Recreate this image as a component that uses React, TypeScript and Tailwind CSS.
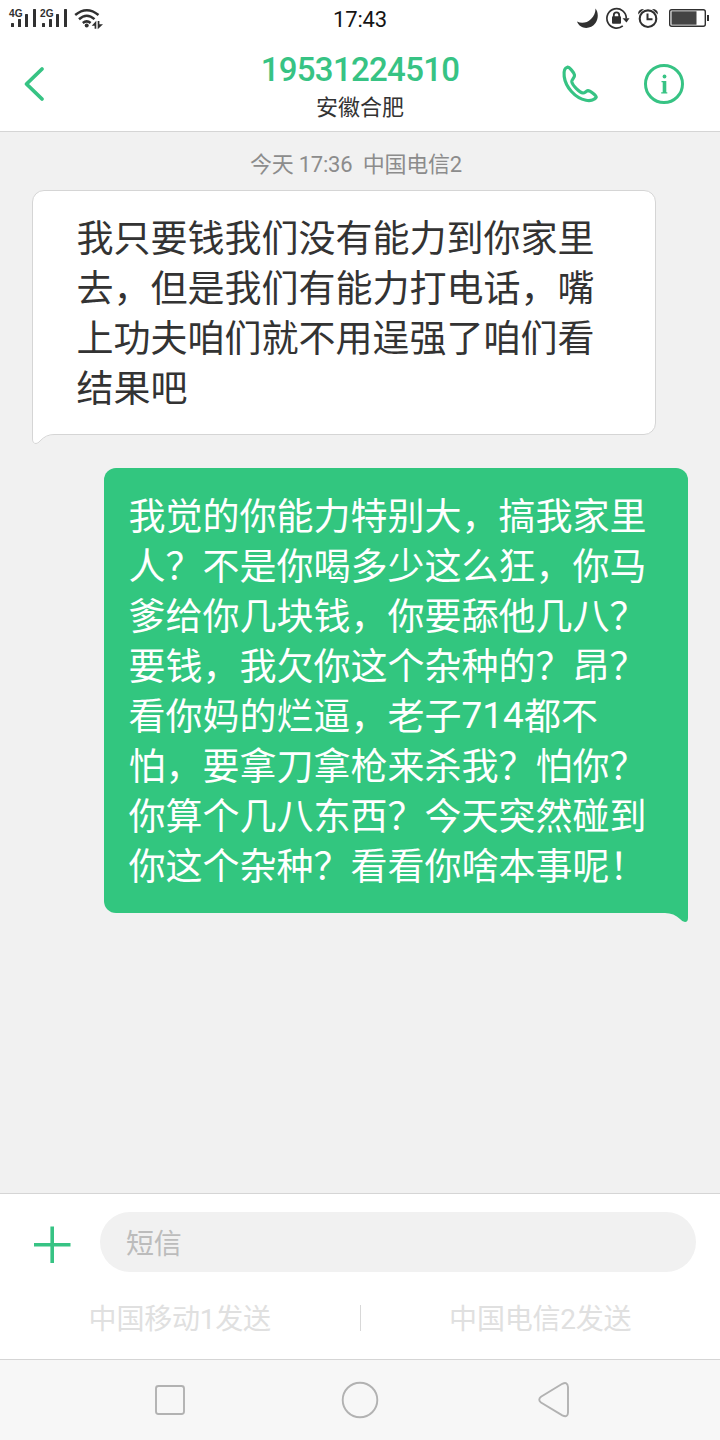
import React from "react";

const received = ["我只要钱我们没有能力到你家里", "去，但是我们有能力打电话，嘴", "上功夫咱们就不用逞强了咱们看", "结果吧"];
const sent = [
  "我觉的你能力特别大，搞我家里",
  "人？不是你喝多少这么狂，你马",
  "爹给你几块钱，你要舔他几八？",
  "要钱，我欠你这个杂种的？昂？",
  "看你妈的烂逼，老子714都不",
  "怕，要拿刀拿枪来杀我？怕你？",
  "你算个几八东西？今天突然碰到",
  "你这个杂种？看看你啥本事呢！",
];

function Line({ text }: { text: string }) {
  return (
    <div className="h-[50px] whitespace-nowrap">
      {text.split(/(\d+)/).map((part, i) =>
        i % 2 ? <span key={i} className="inline-block -translate-y-0.5">{part}</span> : part,
      )}
    </div>
  );
}

function Signal({ label }: { label: string }) {
  return (
    <svg width="31" height="24" viewBox="0 0 31 24" fill="#303030">
      <text x="1" y="11.500" fontSize="10" fontWeight="700" fontFamily="Liberation Sans, sans-serif" textLength="13.500" lengthAdjust="spacingAndGlyphs">{label}</text>
      <rect x="3" y="18" width="3" height="4" rx=".6" />
      <rect x="10" y="14" width="3" height="8" rx=".6" />
      <rect x="17" y="9" width="3" height="13" rx=".6" />
      <rect x="25" y="4" width="3" height="18" rx=".6" />
    </svg>
  );
}

function StatusBar() {
  return (
    <div className="grid h-10 grid-cols-3 items-center">
      <div className="flex h-10 items-start pt-[5px] pl-2">
        <Signal label="4G" />
        <Signal label="2G" />
        <svg width="34" height="26" viewBox="0 0 34 26" fill="none" stroke="#303030" strokeWidth="2.500" className="ml-[3px]">
          <path d="M2.200 10Q13.800.4 25.500 10M6 14.200Q13.800 7.200 21.500 14.200M9.800 18Q13.800 14.700 17.600 18" />
          <circle cx="13.700" cy="20.500" r="2" fill="#303030" stroke="none" />
          <path d="M23.300 15.700V23.700H21.600V20.700H18.700ZM24.700 24.200V16H26.400V19.300H30Z" fill="#303030" stroke="none" />
        </svg>
      </div>
      <div className="text-center text-[22px] leading-10 tracking-[-0.2px] text-[#151515]">17:43</div>
      <div className="flex h-10 items-start justify-end pt-1 pr-[10px]">
        <svg width="134" height="28" viewBox="576 4 134 28" fill="none" stroke="#303030">
          <path d="M595.500 8.500C598.300 12 598.800 18.500 595.500 23 590.500 30 580 29.500 577 21.500 581.500 24 587 23 591 19 594 16 595.500 12.500 595.500 8.500Z" fill="#303030" stroke="none" />
          <path d="M622.800 25.800A9.700 9.700 0 1 1 626.300 18.500" strokeWidth="1.700" />
          <path d="M622.500 18.200H629.500L626.500 22.500Z" fill="#303030" stroke="none" />
          <rect x="612" y="16.300" width="9" height="7.500" rx="1" fill="#303030" stroke="none" />
          <path d="M613.800 17V15A2.700 2.700 0 0 1 619.200 15V17" strokeWidth="1.800" />
          <circle cx="648" cy="18.700" r="8.300" strokeWidth="2.100" />
          <path d="M647.500 13.500V19.200H652.500" strokeWidth="2" />
          <path d="M638.200 14.500Q637.500 9 644 9ZM657.800 14.500Q658.500 9 652 9Z" fill="#303030" stroke="none" />
          <rect x="669.700" y="9.700" width="35.600" height="16.600" rx="2" strokeWidth="1.400" />
          <rect x="671.500" y="11.300" width="25" height="13.400" fill="#444" stroke="none" />
          <rect x="707" y="15" width="2" height="6" fill="#303030" stroke="none" />
        </svg>
      </div>
    </div>
  );
}

function Header() {
  return (
    <header className="grid h-[92px] grid-cols-[180px_360px_180px] border-b border-[#d5d5d5]">
      <svg width="60" height="68" viewBox="0 50 60 68" className="mt-2.5" fill="none" stroke="#37c384" strokeWidth="3.800" strokeLinecap="round" strokeLinejoin="round">
        <path d="M42 69L26.500 84 42 99" />
      </svg>
      <div className="flex flex-col items-center pt-[10px]">
        <h1 className="text-[33px] leading-10 font-medium tracking-[-0.7px] text-[#37c384]">19531224510</h1>
        <p className="mt-1 text-[22px] leading-7 text-[#333]">安徽合肥</p>
      </div>
      <svg width="180" height="90" viewBox="540 40 180 90" fill="none" stroke="#37c384" strokeLinecap="round" strokeLinejoin="round">
        <path d="M567.300 67.200C564.600 67.800 563.600 71 564.200 76.500 565.500 87 575 98 586 100.300 590.800 101.200 595 99.800 596.200 97.300 596.400 95.600 590 90.500 588 90.600 585.800 91 585 93.200 583 93 579.500 92.500 572.500 85.500 571.800 81.700 571.600 79.500 575 77.500 574.500 75 574 72.500 569.500 67 567.300 67.200Z" strokeWidth="3.200" />
        <circle cx="664" cy="84" r="18.500" strokeWidth="3" />
        <circle cx="664.500" cy="76.500" r="1.900" fill="#37c384" stroke="none" />
        <path d="M661.500 81H666.300V92.200H667.300V93.500H661.200V92.200H662.700V82.200H661.500Z" fill="#37c384" stroke="none" />
      </svg>
    </header>
  );
}

function Composer() {
  return (
    <footer className="h-[166px] border-t border-[#d5d5d5] bg-white">
      <div className="flex pt-[18px]">
        <svg width="100" height="60" viewBox="0 1212 100 60" stroke="#37c384" strokeWidth="3.600">
          <path d="M34 1244.700H70.500M52.200 1226.500V1263" />
        </svg>
        <div className="h-[60px] w-[596px] rounded-full bg-[#f1f1f1] pl-[26px] text-[28px] leading-[66px] tracking-[-0.3px] text-[#bcbcbc]">短信</div>
      </div>
      <div className="mt-[26px] flex h-10 items-center text-center text-[28px] leading-10 tracking-[-0.2px] text-[#e0e0e0]">
        <div className="flex-1 pt-1">中国移动1发送</div>
        <span className="h-[26px] w-px bg-[#d8d8d8]" />
        <div className="flex-1 pt-1">中国电信2发送</div>
      </div>
    </footer>
  );
}

export default function App() {
  return (
    <div className="flex h-[1440px] w-[720px] flex-col overflow-hidden bg-white font-['Roboto','Noto_Sans_CJK_SC',sans-serif]" lang="zh-CN">
      <StatusBar />
      <Header />
      <main className="flex-1 bg-[#f1f1f1]">
        <div className="pt-[17px] pl-[250px] text-[22px] leading-8 tracking-[-0.25px] whitespace-pre text-[#8c8c8c]">今天 17:36  中国电信2</div>
        <section className="relative mt-[9px] ml-8 h-[245px] w-[624px] rounded-xl rounded-bl-none border border-[#d5d5d5] bg-white pt-6 pl-[43.5px] text-[37px] leading-[50px] text-[#333]">
          {received.map((line) => <Line key={line} text={line} />)}
          <svg className="absolute -bottom-[11px] -left-px" width="26" height="26" viewBox="0 0 26 26">
            <path d="M0 0V20Q0 25 4 25 6 25 8 22.500 14 16 22 16H26V0Z" fill="#fff" />
            <path d="M.5 0V20Q.5 24.500 4 24.500 6 24.500 8 22 14 15.500 22 15.500H26" fill="none" stroke="#d5d5d5" />
          </svg>
        </section>
        <section className="relative mt-[33px] ml-[104px] h-[445px] w-[584px] rounded-xl rounded-br-none bg-[#32c67f] pt-[25px] pl-[24.5px] text-[37px] leading-[50px] text-white">
          {sent.map((line) => <Line key={line} text={line} />)}
          <svg className="absolute right-0 -bottom-[9px]" width="26" height="10" viewBox="0 0 26 10">
            <path d="M0 0V1H3Q12 1 18 7 20.500 10 23 10 26 10 26 6V0Z" fill="#32c67f" />
          </svg>
        </section>
      </main>
      <Composer />
      <nav className="h-[81px] border-t border-[#d5d5d5] bg-[#f7f7f7]">
        <svg width="720" height="80" viewBox="0 1360 720 80" fill="none" stroke="#b2b2b2" strokeWidth="1.900">
          <rect x="156" y="1386" width="28" height="28" rx="2.500" />
          <circle cx="360" cy="1400" r="17.300" />
          <path d="M562.300 1383.800L541 1396.800Q537.500 1399.700 541 1402.500L562.300 1415.300Q568 1418 568 1412.500V1387Q567.500 1381.200 562.300 1383.800Z" />
        </svg>
      </nav>
    </div>
  );
}
